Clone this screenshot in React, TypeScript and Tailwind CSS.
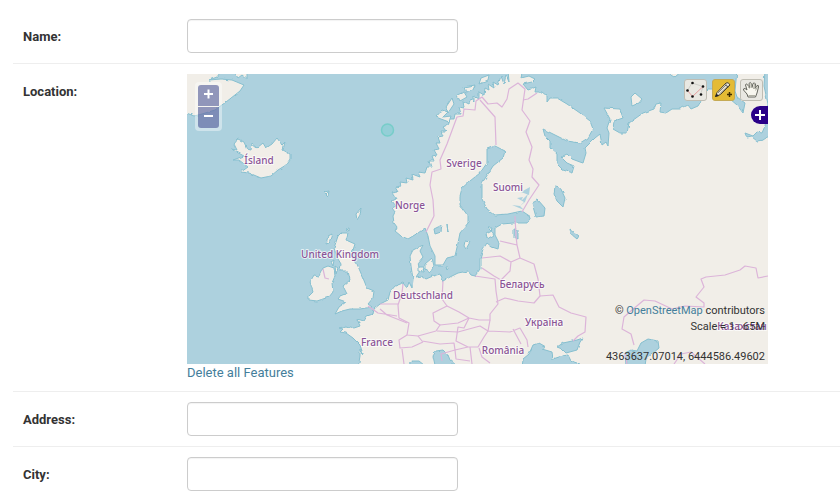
import type { ReactNode } from "react";

const countries = [
  { name: "Ísland", x: 259, y: 164 },
  { name: "Sverige", x: 464, y: 167 },
  { name: "Suomi", x: 508, y: 191 },
  { name: "Norge", x: 410, y: 209 },
  { name: "United Kingdom", x: 340, y: 258 },
  { name: "Deutschland", x: 423, y: 299 },
  { name: "Беларусь", x: 522, y: 288 },
  { name: "Україна", x: 544, y: 326 },
  { name: "France", x: 377, y: 346 },
  { name: "România", x: 503, y: 354 },
  { name: "Казахстан", x: 742, y: 330 },
];

const mainland =
  "M393 216L395 212 392 208 396 206 392 201 396 199 392 193 398 192 395 187 401 186 400 182 407 183 406 178 413 180 412 174 420 177 418 172 425 173 427 167 431 167 429 161 434 161 432 156 437 155 434 150 439 149 436 143 440 143 438 137 443 136 441 131 446 131 443 127 449 124 447 119 454 119 455 114 461 114 459 107 464 108 463 101 469 104 471 99 474 102 474 96 479 99 479 92 484 95 485 88 489 90 488 84 494 88 493 82 498 85 501 76 504 84 506 75 509 82 508 70L523 70 521 78 529 76 535 79 532 82 523 84 528 90 536 87 535 92 542 92 547 96 547 102 550 98 557 98 567 104 580 113 590 121 593 129 588 138 580 143 567 141 553 134 543 129 545 136 550 141 550 148 557 154 557 164 563 170 572 173 574 166 567 163 561 157 567 154 572 159 580 162 583 163 586 153 585 148 595 138 600 134 602 145 606 142 608 146 609 133 607 128 610 119 604 108 620 109 623 118 614 121 613 129 620 133 627 133 629 123 643 113 654 109 656 104 661 103 660 112 666 113 672 109 680 109 688 105 691 109 698 106 701 101 700 97 708 89 720 89 730 99 737 105 743 113 745 103 737 97 735 91 737 70 765 70 764 86 768 104 765 126 762 133 757 132 753 136 745 133 747 138 752 137 757 141 763 140 772 134V368H358L360 356 360 349 363 354 360 345 353 338 346 333 340 332 343 329 339 328 347 326 354 328 360 326 357 319 364 321 367 316 373 314 374 309 380 304 388 300 390 292 395 286 403 283 407 288 409 282 412 288 413 279 411 266 410 256 413 250 423 245 420 251 423 257 418 263 420 271 416 277 422 276 426 279 433 276 440 274 443 281 450 277 458 273 468 271 471 275 475 276 480 269 480 259 483 249 487 243 492 247 498 249 499 243 495 235 495 228 502 224 513 223 527 223 531 217 522 211 508 214 495 215 487 209 482 199 482 183 488 174 493 166 503 158 505 151 495 146 487 149 487 163 480 173 470 181 462 188 460 196 460 205 468 216 468 223 460 233 458 243 455 256 447 258 443 265 435 265 435 256 430 246 428 236 425 228 418 233 408 239 401 236 395 231 397 227 394 223Z";

const islands = [
  "M184 70H222L217 77 209 80 221 79 232 80 244 85 240 91 226 102 215 110 202 114 194 116 184 112Z",
  "M233 70H247V79L242 75 238 78Z",
  "M231 149L237 150 234 144 238 139 244 142 247 149 251 150 252 144 257 148 263 143 266 148 272 144 277 138 282 145 285 142 283 150 290 154 290 159 286 165 278 170 271 176 261 178 249 173 241 172 248 167 239 160 233 160 244 156Z",
  "M338 236L341 233 348 233 346 240 355 244 351 256 357 264 363 278 367 288 374 291 373 298 368 304 372 307 360 309 350 309 342 311 335 314 339 307 346 302 338 299 341 295 347 294 343 286 350 280 348 271 340 271 341 264 338 259 334 248Z",
  "M323 268L328 266 334 268 335 276 332 283 333 292 329 297 317 301 309 300 309 296 313 292 310 282 314 275 319 276Z",
  "M328 236L332 234 329 243 326 244ZM331 262L334 260 333 266ZM335 266L338 268 336 274ZM346 229L349 228 349 231Z",
  "M425 264L432 258 434 266 430 273 425 269ZM418 267L424 267 423 272 418 271ZM446 267L449 267 447 270ZM465 241L470 242 466 249 464 246ZM486 234L492 231 494 235 487 239ZM488 228L492 228 491 231Z",
  "M631 97L635 93 642 99 639 103 632 106ZM664 70H683L675 77Z",
  "M436 117L442 110 448 112 443 117 451 116 449 122 441 119ZM446 107L452 98 454 104 448 113ZM457 95L464 92 467 97 460 101ZM464 87L475 85 473 90 466 93ZM481 78L489 75 488 80 479 84Z",
  "M324 192L329 191 328 196ZM356 214L361 208 360 215 357 220Z",
];

const lakes = [
  "M532 203L538 200 545 208 544 216 536 217Z",
  "M555 186L560 187 565 198 563 207 557 201 554 194Z",
  "M434 229L442 225 441 232 435 234ZM447 224L448 233ZM570 229L579 236 577 239 571 234ZM514 229L518 230 518 239 514 237Z",
  "M522 366L523 359 529 354 533 345 539 343 546 347 542 349 552 352 553 359 562 356 568 355 571 361 580 364 575 368Z",
  "M557 347L563 343 577 340 583 338 580 342 577 350 566 353 562 349Z",
  "M626 366L625 353 631 350 637 351 641 343 648 339 658 341 659 348 652 354 646 359 645 366Z",
  "M435 365L433 356 436 351 443 350 448 355 450 360 456 365ZM408 365L413 361 419 361 424 365Z",
];

const finnishLakes =
  "M517 198L523 197 521 201 528 194 525 202 520 206 524 202ZM512 205L520 206 524 210ZM521 192L530 187 529 195Z";

const borders = [
  "M434 216L433 200 430 185 432 172 441 169 440 160 447 144 457 117 463 116 464 109 475 110 476 101 482 97 488 104 497 103 502 107 507 99 509 89 518 83 525 89 522 110 530 121 526 132 532 147 529 160 533 169 532 177 539 185 529 200 522 212",
  "M480 100L495 117 496 145M523 100L528 99 537 93M434 216L426 232",
  "M323 269L325 278 329 279M403 284L402 293 398 305 399 318 409 323 407 335 418 336 436 331 440 325 434 321 433 313 447 306 442 299 443 281",
  "M447 306L459 312 469 318 458 323 440 325M469 318L479 320 490 320 490 314 498 304 496 291 495 279 475 276M482 258L500 256 511 262 520 258 517 245 500 241M511 262L510 271 501 280 494 276 482 268M517 245L516 236 515 216M520 258L534 264 538 279 540 296 534 303 518 301 505 298 496 302",
  "M540 296L553 295 559 307 571 313 586 317 585 332 578 336 573 341M469 318L464 328 458 327 456 341 468 347 478 347 484 337 488 331 510 332 520 328 527 340 528 347M490 320L488 331 480 326 458 332 437 331M468 347L455 350 454 343 440 344 422 341 418 336M407 335L399 340 400 348 412 347 423 342M402 349L404 364M455 350L441 354 442 361M455 350L456 359 470 361M470 347L472 364M479 348L482 357 490 363M513 329L521 344",
  "M380 304L398 304M380 309L387 315 407 323M368 306L378 313 397 316",
  "M634 345L631 334 622 329 624 317 632 310 644 300 655 301 672 309 685 306 704 307 704 303 696 297 704 287 701 279 706 277 725 275 740 270 745 266 756 268 758 278 768 276M674 364L681 354 691 352 705 364M627 364L625 353",
];

function MapCanvas() {
  return (
    <svg
      viewBox="187 74 581 290"
      className="block h-auto w-full bg-[#add1de] font-['Noto_Sans',sans-serif] text-[10px] font-medium"
      role="img"
      aria-label="Map"
    >
      <defs>
        <filter id="coast" x="183" y="68" width="589" height="302" filterUnits="userSpaceOnUse">
          <feTurbulence type="fractalNoise" baseFrequency="0.2" numOctaves="1" seed="4" />
          <feDisplacementMap in="SourceGraphic" scale="3" xChannelSelector="R" yChannelSelector="G" />
          <feGaussianBlur stdDeviation="0.35" />
        </filter>
      </defs>
      <g filter="url(#coast)" stroke="#86bfcf" strokeWidth="1" strokeLinejoin="round">
        <path d={mainland} fill="#f1eee8" />
        {islands.map((d) => (
          <path key={d} d={d} fill="#f1eee8" />
        ))}
        {lakes.map((d) => (
          <path key={d} d={d} fill="#add1de" />
        ))}
      </g>
      <path d={finnishLakes} fill="#add1de" />
      <g fill="none" stroke="#dcb4d9" strokeWidth="1.2" strokeLinejoin="round">
        {borders.map((d) => (
          <path key={d} d={d} />
        ))}
      </g>
      <g
        fill="#8a5496"
        stroke="#ffffff"
        strokeOpacity="0.7"
        strokeWidth="2"
        strokeLinejoin="round"
        paintOrder="stroke"
        textAnchor="middle"
      >
        {countries.map((c) => (
          <text key={c.name} x={c.x} y={c.y}>
            {c.name}
          </text>
        ))}
      </g>
      <circle cx="387.5" cy="130" r="6" fill="#66cccc" fillOpacity="0.35" stroke="#77cdc9" strokeWidth="1.5" />
    </svg>
  );
}

function ToolButton({ label, active, children }: { label: string; active?: boolean; children: ReactNode }) {
  return (
    <button
      type="button"
      aria-label={label}
      className={
        active
          ? "flex h-[22px] w-[23px] items-center justify-center rounded-[3px] border border-[#c5aa55] bg-[#e4bb34]"
          : "flex h-[22px] w-[23px] items-center justify-center rounded-[3px] border border-[#bfbdb3] bg-[#e9e8e2]"
      }
    >
      <svg viewBox="0 0 21 20" className="h-5 w-[21px] shrink-0">
        {children}
      </svg>
    </button>
  );
}

function ZoomButton({ label, d }: { label: string; d: string }) {
  return (
    <button
      type="button"
      aria-label={label}
      className="flex size-[21px] items-center justify-center bg-[rgba(44,55,132,0.5)] first:rounded-t-[3px] last:rounded-b-[3px]"
    >
      <svg viewBox="0 0 21 21" className="size-[21px]">
        <path d={d} stroke="white" strokeWidth="2" />
      </svg>
    </button>
  );
}

function LocationMap() {
  return (
    <div className="relative w-full max-w-[581px] overflow-hidden">
      <MapCanvas />
      <div className="absolute top-2 left-2 flex flex-col gap-px rounded bg-white/40 p-[3px]">
        <ZoomButton label="Zoom in" d="M6 9h9M10.5 4.5v9" />
        <ZoomButton label="Zoom out" d="M6 9h9" />
      </div>
      <div className="absolute top-[5px] right-[5px] flex gap-[5px]">
        <ToolButton label="Draw shape">
          <path d="M2.500 10.500L7 3 18 6.500 15.500 14.500" fill="none" stroke="#cfcfca" />
          <path d="M2.500 10.500L7.500 16.500 18 6.500" fill="none" stroke="#e79f9f" />
          <g fill="#111">
            <circle cx="7.500" cy="3" r="1.300" />
            <circle cx="18" cy="6.500" r="1.300" />
            <circle cx="2.500" cy="10.500" r="1.300" />
            <circle cx="7.500" cy="16.500" r="1.300" />
            <circle cx="16" cy="14.500" r="1.300" />
          </g>
        </ToolButton>
        <ToolButton label="Draw point" active>
          <path d="M2.500 16.500L4 12.500 13 3Q15.500 1.500 17 5L7.500 14.500Z" fill="#ece8dc" stroke="#4d4326" />
          <path d="M5 13L13.500 4.500M6.500 14L15.500 5.500" stroke="#8f8977" />
          <path d="M11.500 4.500L15.500 7" stroke="#555" />
          <path d="M2 17L3.500 13.500 6 16Z" fill="#222" />
          <path d="M14 14.500h5M16.500 12v5" stroke="#3b2b00" strokeWidth="1.500" />
        </ToolButton>
        <ToolButton label="Pan">
          <path
            d="M7 17L6 14 2.500 10Q2 8.500 4 8.500L6 10 4.500 5Q5 3 6.500 4.500L8.500 8 8 3.500Q9 1.500 10.500 3.500L11 7.500 12 3.500Q13.500 2 14.500 4L14 8.500 16 5.500Q18 5 17.500 7L16 13 14.500 17Z"
            fill="#f8f7ef"
            stroke="#66675f"
            strokeLinejoin="round"
          />
          <path d="M6.500 4.500l2 4M10 3v5M13.500 4l-1 5M16.500 6.500l-2 4M7.500 15.500h7" fill="none" stroke="#b0b0a4" />
        </ToolButton>
      </div>
      <button
        type="button"
        aria-label="Show layers"
        className="absolute top-8 right-0 flex h-[18px] w-[17px] items-center justify-center rounded-l-full bg-[#2a0088]"
      >
        <svg viewBox="0 0 10 10" className="size-[10px]">
          <path d="M0 5h10M5 0v10" stroke="white" strokeWidth="2" />
        </svg>
      </button>
      <div className="absolute right-[3px] -bottom-px text-right text-[11px] leading-4 text-[#333]">
        <p>
          ©{" "}
          <a href="#osm" className="text-[#447e9b]">
            OpenStreetMap
          </a>{" "}
          contributors
        </p>
        <p>Scale = 1 : 65M</p>
        <p className="mt-[14px]">4363637.07014, 6444586.49602</p>
      </div>
    </div>
  );
}

const labelStyle = "pt-[10px] pl-[10px] text-[13px] leading-4 font-bold text-[#333]";
const rowStyle = "grid grid-cols-[174px_1fr] py-[10px]";

function TextRow({ id, label }: { id: string; label: string }) {
  return (
    <div className={rowStyle}>
      <label htmlFor={id} className={labelStyle}>
        {label}
      </label>
      <input
        id={id}
        type="text"
        className="h-[34px] w-full max-w-[271px] rounded border border-[#ccc] bg-white px-2 text-[13px] shadow-[inset_0_1px_1px_rgba(0,0,0,0.05)]"
      />
    </div>
  );
}

export default function App() {
  return (
    <form className="divide-y divide-[#eee] bg-white pt-[9px] pl-[13px] font-[Roboto,sans-serif]">
      <TextRow id="name" label="Name:" />
      <div className={rowStyle}>
        <span className={labelStyle}>Location:</span>
        <div>
          <LocationMap />
          <a href="#delete" className="block pt-px text-[13px] leading-4 text-[#447e9b]">
            Delete all Features
          </a>
        </div>
      </div>
      <TextRow id="address" label="Address:" />
      <TextRow id="city" label="City:" />
    </form>
  );
}
